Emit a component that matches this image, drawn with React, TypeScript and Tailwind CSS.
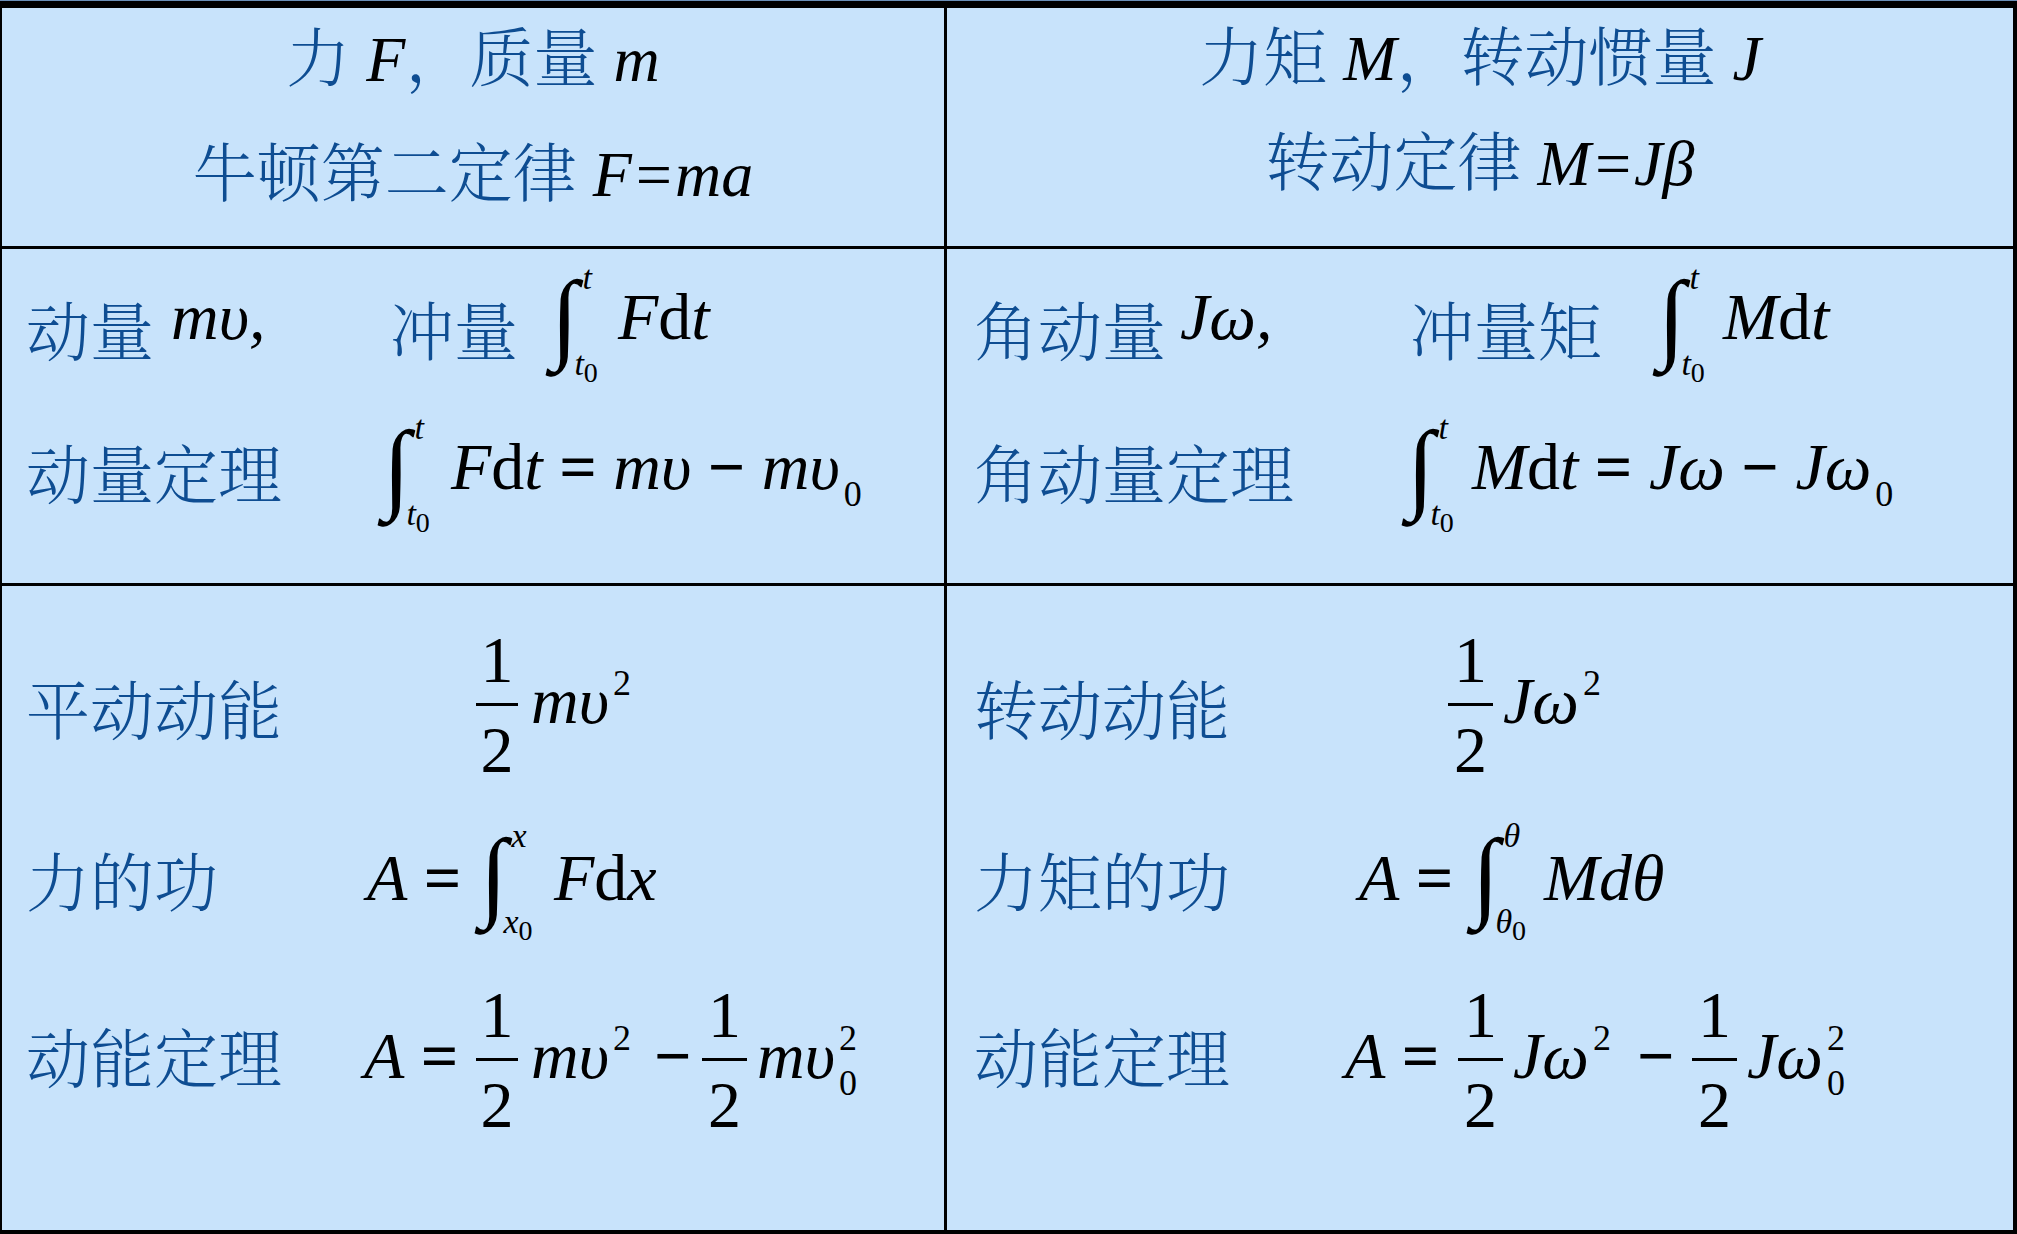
import React from "react";

const zh =
  "font-['Noto_Serif_CJK_SC','Noto_Sans_CJK_SC',sans-serif] font-light text-[#0e4d92] text-[64px] leading-none whitespace-nowrap shrink-0";
const tm = "font-['Liberation_Serif',serif] leading-none text-black whitespace-nowrap shrink-0";
const cell = "bg-[#c8e3fb]";

type P = { className?: string; children?: React.ReactNode };

function Zh({ className = "", children }: P) {
  return <div className={`${zh} ${className}`}>{children}</div>;
}

function Mt({ className = "", children }: P) {
  return <div className={`${tm} text-[66px] ${className}`}>{children}</div>;
}

const I = ({ children }: P) => <span className="italic">{children}</span>;

// thick operators, like the equation editor's = and −
const Op = ({ children }: P) => <span className="not-italic font-bold">{children}</span>;

const Sup = ({ children }: P) => (
  <span className="not-italic text-[36px] align-[28px] ml-[4px]">{children}</span>
);

const Sub = ({ children }: P) => (
  <span className="not-italic text-[36px] align-[-17px] ml-[4px]">{children}</span>
);

// subscript 0 with superscript 2 stacked
const SubSup = () => (
  <span className="inline-flex flex-col not-italic text-[36px] align-[28px] ml-[4px]">
    <span>2</span>
    <span className="mt-[9px]">0</span>
  </span>
);

function Integral({
  className = "",
  upper,
  lower,
}: {
  className?: string;
  upper: React.ReactNode;
  lower: React.ReactNode;
}) {
  return (
    <div className={`flex items-start shrink-0 ${className}`}>
      <span className={`${tm} text-[100px]`}>∫</span>
      <div className="flex flex-col -mt-[6px]">
        <span className={`${tm} text-[34px] italic ml-[4px]`}>{upper}</span>
        <span className={`${tm} text-[34px] italic mt-[52px] -ml-[4px]`}>{lower}</span>
      </div>
    </div>
  );
}

const Low = ({ v }: { v: string }) => (
  <>
    {v}
    <span className="not-italic text-[28px] align-[-7px]">0</span>
  </>
);

function Frac({ className = "" }: P) {
  return (
    <div className={`flex flex-col items-center shrink-0 ${className}`}>
      <span className={`${tm} text-[66px]`}>1</span>
      <span className="mt-[10px] h-[3px] w-full bg-black" />
      <span className={`${tm} text-[66px] mt-[11px]`}>2</span>
    </div>
  );
}

function HMath({ children }: P) {
  return <span className={`${tm} text-[64px] italic`}>{children}</span>;
}

export default function App() {
  return (
    <div className="w-[2017px] h-[1234px] bg-black border-t border-[#6b8fb8] pt-[7px] pl-[2px] pr-[4px] pb-[4px] overflow-hidden">
      <div className="grid grid-cols-[942px_1066px] grid-rows-[238px_334px_644px] gap-[3px] h-full">
        {/* header left */}
        <div className={`${cell} pt-[13px]`}>
          <div className="flex justify-center items-baseline h-[115px]">
            <span className={zh}>力</span>
            <HMath>&nbsp;F</HMath>
            <span className={zh}>，质量</span>
            <HMath>&nbsp;m</HMath>
          </div>
          <div className="flex justify-center items-baseline">
            <span className={zh}>牛顿第二定律</span>
            <HMath>&nbsp;F=ma</HMath>
          </div>
        </div>

        {/* header right */}
        <div className={`${cell} pt-[12px]`}>
          <div className="flex justify-center items-baseline h-[105px]">
            <span className={zh}>力矩</span>
            <HMath>&nbsp;M</HMath>
            <span className={zh}>，转动惯量</span>
            <HMath>&nbsp;J</HMath>
          </div>
          <div className="flex justify-center items-baseline">
            <span className={zh}>转动定律</span>
            <HMath>&nbsp;M=Jβ</HMath>
          </div>
        </div>

        {/* momentum left */}
        <div className={`${cell} pl-[24px] flex flex-col`}>
          <div className="flex items-start h-[150px]">
            <Zh className="w-[145px] mt-[46px]">动量</Zh>
            <Mt className="w-[219px] mt-[35px] italic">mυ,</Mt>
            <Zh className="w-[161px] mt-[46px]">冲量</Zh>
            <Integral className="w-[67px] mt-[18px]" upper="t" lower={<Low v="t" />} />
            <Mt className="mt-[35px]">
              <I>F</I>d<I>t</I>
            </Mt>
          </div>
          <div className="flex items-start h-[150px]">
            <Zh className="w-[357px] mt-[39px]">动量定理</Zh>
            <Integral className="w-[68px] mt-[18px]" upper="t" lower={<Low v="t" />} />
            <Mt className="mt-[35px]">
              <I>F</I>d<I>t</I> <Op>=</Op> <I>mυ</I> <Op>−</Op> <I>mυ</I>
              <Sub>0</Sub>
            </Mt>
          </div>
        </div>

        {/* momentum right */}
        <div className={`${cell} pl-[27px] flex flex-col`}>
          <div className="flex items-start h-[150px]">
            <Zh className="w-[206px] mt-[46px]">角动量</Zh>
            <Mt className="w-[230px] mt-[35px] italic">Jω,</Mt>
            <Zh className="w-[248px] mt-[46px]">冲量矩</Zh>
            <Integral className="w-[65px] mt-[18px]" upper="t" lower={<Low v="t" />} />
            <Mt className="mt-[35px]">
              <I>M</I>d<I>t</I>
            </Mt>
          </div>
          <div className="flex items-start h-[150px]">
            <Zh className="w-[433px] mt-[39px]">角动量定理</Zh>
            <Integral className="w-[65px] mt-[18px]" upper="t" lower={<Low v="t" />} />
            <Mt className="mt-[35px]">
              <I>M</I>d<I>t</I> <Op>=</Op> <I>Jω</I> <Op>−</Op> <I>Jω</I>
              <Sub>0</Sub>
            </Mt>
          </div>
        </div>

        {/* energy left */}
        <div className={`${cell} pl-[24px] flex flex-col`}>
          <div className="flex items-start h-[174px]">
            <Zh className="w-[450px] mt-[88px]">平动动能</Zh>
            <Frac className="w-[42px] mt-[41px]" />
            <Mt className="ml-[13px] mt-[79px] italic">
              mυ<Sup>2</Sup>
            </Mt>
          </div>
          <div className="flex items-start h-[174px]">
            <Zh className="w-[341px] mt-[86px]">力的功</Zh>
            <Mt className="w-[113px] mt-[85px]">
              <I>A</I> <Op>=</Op>
            </Mt>
            <Integral className="w-[74px] mt-[65px]" upper="x" lower={<Low v="x" />} />
            <Mt className="mt-[85px]">
              <I>F</I>d<I>x</I>
            </Mt>
          </div>
          <div className="flex items-start h-[174px]">
            <Zh className="w-[338px] mt-[88px]">动能定理</Zh>
            <Mt className="w-[112px] mt-[89px]">
              <I>A</I> <Op>=</Op>
            </Mt>
            <Frac className="w-[42px] mt-[48px]" />
            <Mt className="w-[136px] pl-[13px] mt-[86px] italic">
              mυ<Sup>2</Sup>
            </Mt>
            <Mt className="w-[48px] mt-[89px]">
              <Op>−</Op>
            </Mt>
            <Frac className="w-[45px] mt-[48px]" />
            <Mt className="ml-[10px] mt-[86px] italic">
              mυ<SubSup />
            </Mt>
          </div>
        </div>

        {/* energy right */}
        <div className={`${cell} pl-[27px] flex flex-col`}>
          <div className="flex items-start h-[174px]">
            <Zh className="w-[474px] mt-[88px]">转动动能</Zh>
            <Frac className="w-[45px] mt-[41px]" />
            <Mt className="ml-[10px] mt-[79px] italic">
              Jω<Sup>2</Sup>
            </Mt>
          </div>
          <div className="flex items-start h-[174px]">
            <Zh className="w-[385px] mt-[86px]">力矩的功</Zh>
            <Mt className="w-[113px] mt-[85px]">
              <I>A</I> <Op>=</Op>
            </Mt>
            <Integral className="w-[72px] mt-[65px]" upper="θ" lower={<Low v="θ" />} />
            <Mt className="mt-[85px] italic">Mdθ</Mt>
          </div>
          <div className="flex items-start h-[174px]">
            <Zh className="w-[371px] mt-[88px]">动能定理</Zh>
            <Mt className="w-[113px] mt-[89px]">
              <I>A</I> <Op>=</Op>
            </Mt>
            <Frac className="w-[45px] mt-[48px]" />
            <Mt className="w-[134px] pl-[10px] mt-[86px] italic">
              Jω<Sup>2</Sup>
            </Mt>
            <Mt className="w-[55px] mt-[89px]">
              <Op>−</Op>
            </Mt>
            <Frac className="w-[45px] mt-[48px]" />
            <Mt className="ml-[10px] mt-[86px] italic">
              Jω<SubSup />
            </Mt>
          </div>
        </div>
      </div>
    </div>
  );
}
